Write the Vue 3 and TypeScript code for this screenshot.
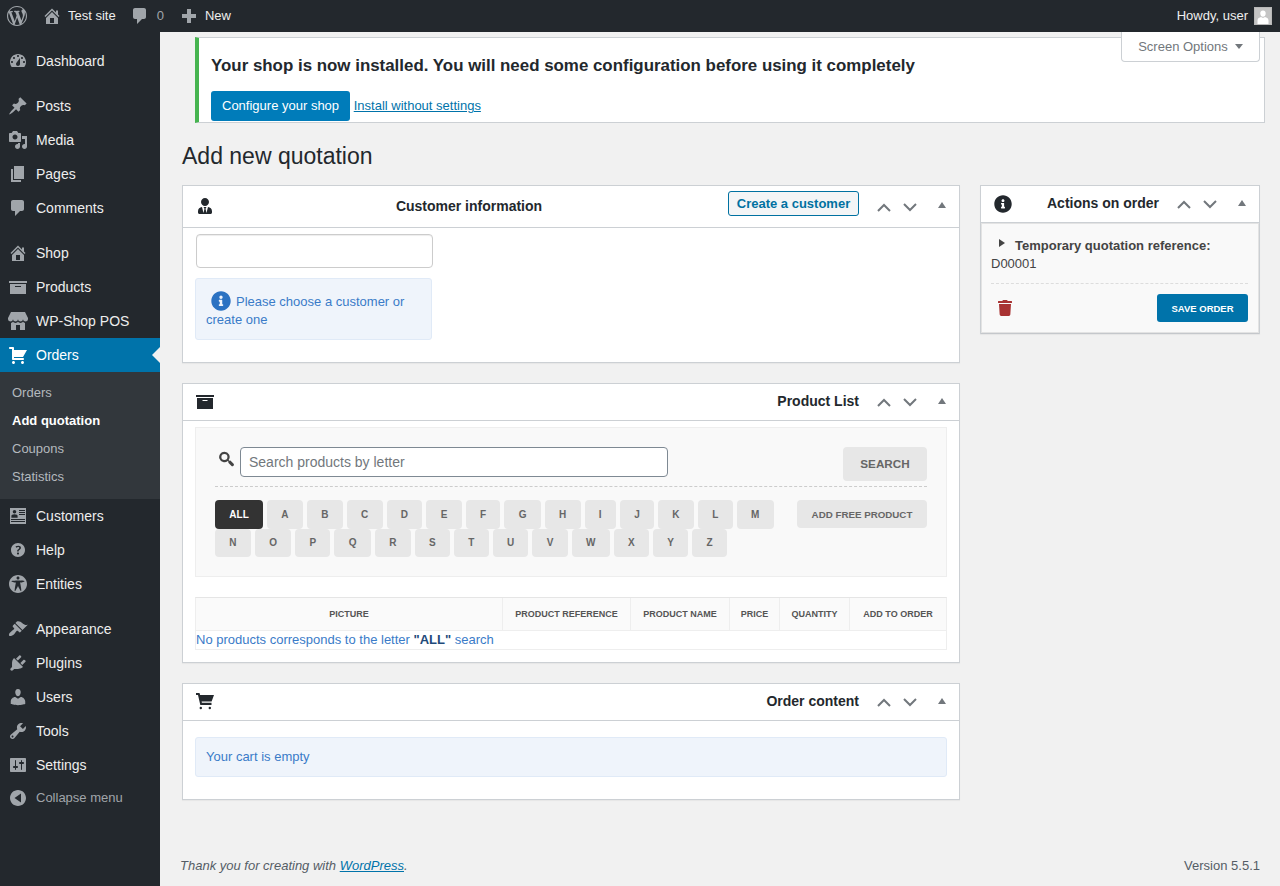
<script setup lang="ts">
const icons: Record<string, string> = {
  wp: "M20 10c0-5.51-4.49-10-10-10C4.48 0 0 4.49 0 10c0 5.52 4.48 10 10 10 5.51 0 10-4.48 10-10zM7.78 15.37L4.37 6.22c.55-.02 1.17-.08 1.17-.08.5-.06.44-1.13-.06-1.11 0 0-1.45.11-2.37.11-.18 0-.37 0-.58-.01C4.12 2.69 6.87 1.11 10 1.11c2.33 0 4.45.87 6.05 2.34-.68-.11-1.65.39-1.65 1.58 0 .74.45 1.36.9 2.1.35.61.55 1.36.55 2.46 0 1.49-1.4 5-1.4 5l-3.03-8.37c.54-.02.82-.17.82-.17.5-.05.44-1.25-.06-1.22 0 0-1.44.12-2.38.12-.87 0-2.33-.12-2.33-.12-.5-.03-.56 1.2-.06 1.22l.92.08 1.26 3.41zM17.41 10c.24-.64.74-1.87.43-4.25.7 1.29 1.05 2.71 1.05 4.25 0 3.29-1.73 6.24-4.4 7.78.97-2.59 1.94-5.2 2.92-7.78zM6.1 18.09C3.12 16.65 1.11 13.53 1.11 10c0-1.3.23-2.48.72-3.59C3.25 10.3 4.67 14.2 6.1 18.09zm4.03-6.63l2.58 6.98c-.86.29-1.76.45-2.71.45-.79 0-1.57-.11-2.29-.33.81-2.38 1.62-4.74 2.42-7.1z",
  dashboard: "M3.76 16h12.48c1.1-1.37 1.76-3.11 1.76-5 0-4.42-3.58-8-8-8s-8 3.58-8 8c0 1.89.66 3.63 1.76 5zM10 4c.55 0 1 .45 1 1s-.45 1-1 1-1-.45-1-1 .45-1 1-1zM6 6c.55 0 1 .45 1 1s-.45 1-1 1-1-.45-1-1 .45-1 1-1zm8 0c.55 0 1 .45 1 1s-.45 1-1 1-1-.45-1-1 .45-1 1-1zm-5.37 5.55L12 7v6c0 1.1-.9 2-2 2s-2-.9-2-2c0-.57.24-1.08.63-1.45zM4 10c.55 0 1 .45 1 1s-.45 1-1 1-1-.45-1-1 .45-1 1-1zm12 0c.55 0 1 .45 1 1s-.45 1-1 1-1-.45-1-1 .45-1 1-1z",
  pin: "M10.44 3.02l1.82-1.82 6.36 6.35-1.83 1.82c-1.05-.68-2.48-.57-3.41.36l-.75.75c-.92.93-1.04 2.35-.35 3.41l-1.83 1.82-2.41-2.41-2.8 2.79c-.42.42-3.38 2.71-3.8 2.29s1.86-3.39 2.28-3.81l2.79-2.79L4.1 9.36l1.83-1.82c1.05.69 2.48.57 3.4-.36l.75-.75c.93-.92 1.05-2.35.36-3.41z",
  media: "M13 11V4c0-.55-.45-1-1-1h-1.67L9 1H5L3.67 3H2c-.55 0-1 .45-1 1v7c0 .55.45 1 1 1h10c.55 0 1-.45 1-1zM7 4.5c1.38 0 2.5 1.12 2.5 2.5S8.38 9.5 7 9.5 4.5 8.38 4.5 7 5.62 4.5 7 4.5zM14 6h5v10.5c0 1.38-1.12 2.5-2.5 2.5S14 17.88 14 16.5s1.12-2.5 2.5-2.5c.17 0 .34.02.5.05V9h-3V6zm-4 8.05V13h2v3.5c0 1.38-1.12 2.5-2.5 2.5S7 17.88 7 16.5 8.12 14 9.5 14c.17 0 .34.02.5.05z",
  page: "M6 15V2h10v13H6zm-1 1h8v2H3V5h2v11z",
  comment: "M5 2h9c1.1 0 2 .9 2 2v7c0 1.1-.9 2-2 2h-2l-5 5v-5H5c-1.1 0-2-.9-2-2V4c0-1.1.9-2 2-2z",
  home: "M16 8.5l1.53 1.53-1.06 1.06L10 4.62l-6.47 6.47-1.06-1.06L10 2.5l4 4v-2h2v4zm-6-2.46l6 5.99V18H4v-5.97zM12 17v-5H8v5h4z",
  archive: "M19 4v2H1V4h18zM2 7h16v10H2V7zm11 3V9H7v1h6z",
  store: "M1 10c.41.29.96.43 1.5.43.55 0 1.09-.14 1.5-.43.62-.46 1-1.17 1-2 0 .83.37 1.54 1 2 .41.29.96.43 1.5.43.55 0 1.09-.14 1.5-.43.62-.46 1-1.17 1-2 0 .83.37 1.54 1 2 .41.29.96.43 1.51.43.54 0 1.08-.14 1.49-.43.62-.46 1-1.17 1-2 0 .83.37 1.54 1 2 .41.29.96.43 1.5.43.55 0 1.09-.14 1.5-.43.63-.46 1-1.17 1-2V7l-3-6H3L0 7v1c0 .83.37 1.54 1 2zm2 8.99h5v-5h4v5h5v-7c-.37-.05-.72-.22-1-.43-.63-.45-1-.73-1-1.56 0 .83-.38 1.11-1 1.56-.41.3-.95.43-1.49.44-.55 0-1.1-.14-1.51-.44-.63-.45-1-.73-1-1.56 0 .83-.38 1.11-1 1.56-.41.3-.95.43-1.5.44-.54 0-1.09-.14-1.5-.44-.63-.45-1-.73-1-1.57 0 .84-.38 1.12-1 1.57-.29.21-.63.38-1 .44v6.99z",
  cart: "M6 13h9c.55 0 1 .45 1 1s-.45 1-1 1H5c-.55 0-1-.45-1-1V4H2c-.55 0-1-.45-1-1s.45-1 1-1h3c.55 0 1 .45 1 1v2h13l-4 7H6v1zm-.5 3c.83 0 1.5.67 1.5 1.5S6.33 19 5.5 19 4 18.33 4 17.5 4.67 16 5.5 16zm9 0c.83 0 1.5.67 1.5 1.5s-.67 1.5-1.5 1.5-1.5-.67-1.5-1.5.67-1.5 1.5-1.5z",
  id: "M2 2h16v16H2zM11 4v1h6V4zm0 2v1h6V6zm0 2v1h6V8zM3 13v1h14v-1zm0 2v1h14v-1zM6.5 4a1.8 1.8 0 1 0 0 3.6 1.8 1.8 0 0 0 0-3.6zM3.4 11.8h6.2V10c0-1-1-1.8-3.1-1.8S3.4 9 3.4 10z",
  help: "M17 10c0-3.87-3.14-7-7-7-3.87 0-7 3.13-7 7s3.13 7 7 7c3.86 0 7-3.13 7-7zm-6.3 1.48H9.14v-.43c0-.38.08-.7.24-.98s.46-.57.88-.89c.41-.29.68-.53.81-.71.14-.18.2-.39.2-.62 0-.25-.09-.44-.28-.58-.19-.13-.45-.19-.79-.19-.58 0-1.25.19-2 .57l-.64-1.28c.87-.49 1.8-.74 2.77-.74.81 0 1.45.2 1.92.58.48.39.71.91.71 1.55 0 .43-.09.8-.29 1.11-.19.32-.57.67-1.11 1.06-.38.28-.61.49-.71.63-.1.15-.15.34-.15.57v.35zm-1.47 2.74c-.18-.17-.27-.42-.27-.73 0-.33.08-.58.26-.75s.43-.25.77-.25c.32 0 .57.09.75.26s.27.42.27.74c0 .3-.09.55-.27.72-.18.18-.43.27-.75.27-.33 0-.58-.09-.76-.26z",
  access: "M19 10c0-4.97-4.03-9-9-9s-9 4.03-9 9 4.03 9 9 9 9-4.03 9-9zm-9-7.4c.83 0 1.5.67 1.5 1.5s-.67 1.51-1.5 1.51c-.82 0-1.5-.68-1.5-1.51s.68-1.5 1.5-1.5zM3.4 7.36c0-.65 6.6-.76 6.6-.76s6.6.11 6.6.76-4.47 1.4-4.47 1.4 1.69 8.14 1.06 8.38c-.62.24-3.19-5.19-3.19-5.19s-2.56 5.43-3.18 5.19c-.63-.24 1.06-8.38 1.06-8.38S3.4 8.01 3.4 7.36z",
  brush: "M14.48 11.06L7.41 3.99l1.5-1.5c.5-.56 2.3-.47 3.51.32 1.21.8 1.43 1.28 2.91 2.1 1.18.64 2.45 1.26 4.45.85zm-.71.71L6.7 4.7 4.93 6.47c-.39.39-.39 1.02 0 1.41l1.06 1.06c.39.39.39 1.03 0 1.42-.6.6-1.43 1.11-2.21 1.69-.35.26-.7.53-1.01.84C1.43 13.23.4 15.98 1.2 16.8c.78.79 3.55-.23 4.88-1.56.3-.3.57-.65.83-1 .58-.78 1.1-1.62 1.69-2.21.39-.39 1.02-.39 1.41 0l1.06 1.06c.39.39 1.02.39 1.41 0z",
  plugin: "M13.11 4.36L9.87 7.6 8 5.73l3.24-3.24c.35-.34 1.05-.2 1.56.32.52.51.66 1.21.31 1.55zm-8 1.77l.91-1.12 9.01 9.01-1.19.84c-.71.71-2.63 1.16-3.82 1.16H6.14L4.9 17.26c-.59.59-1.54.59-2.12 0-.59-.58-.59-1.53 0-2.12l1.24-1.24v-3.88c0-1.13.4-3.19 1.09-3.89zm7.26 3.97l3.24-3.24c.34-.35 1.04-.21 1.55.31.52.51.66 1.21.31 1.55l-3.24 3.25z",
  user: "M10 9.25c-2.27 0-2.73-3.44-2.73-3.44C7 4.02 7.82 2 9.97 2c2.16 0 2.98 2.02 2.71 3.81 0 0-.41 3.44-2.68 3.44zm0 2.57L12.72 10c2.39 0 4.52 2.33 4.52 4.53v2.49s-3.65 1.13-7.24 1.13c-3.65 0-7.24-1.13-7.24-1.13v-2.49c0-2.25 1.94-4.48 4.47-4.48z",
  wrench: "M16.68 9.77c-1.34 1.34-3.3 1.67-4.95.99l-5.41 6.52c-.99.99-2.59.99-3.58 0s-.99-2.59 0-3.57l6.52-5.42c-.68-1.65-.35-3.61.99-4.95 1.28-1.28 3.12-1.62 4.72-1.06l-2.89 2.89 2.82 2.82 2.86-2.87c.53 1.58.18 3.39-1.08 4.65zM3.81 16.21c.4.39 1.04.39 1.43 0 .4-.4.4-1.04 0-1.43-.39-.4-1.03-.4-1.43 0-.39.39-.39 1.03 0 1.43z",
  settings: "M18 16V4c0-.55-.45-1-1-1H3c-.55 0-1 .45-1 1v12c0 .55.45 1 1 1h14c.55 0 1-.45 1-1zM8 11h1c.55 0 1 .45 1 1s-.45 1-1 1H8v1.5c0 .28-.22.5-.5.5s-.5-.22-.5-.5V13H6c-.55 0-1-.45-1-1s.45-1 1-1h1V5.5c0-.28.22-.5.5-.5s.5.22.5.5V11zm5-2h-1c-.55 0-1-.45-1-1s.45-1 1-1h1V5.5c0-.28.22-.5.5-.5s.5.22.5.5V7h1c.55 0 1 .45 1 1s-.45 1-1 1h-1v5.5c0 .28-.22.5-.5.5s-.5-.22-.5-.5V9z",
  collapse: "M18 10c0-4.42-3.58-8-8-8s-8 3.58-8 8 3.58 8 8 8 8-3.58 8-8zm-5-4.5v9L6.5 10z",
  plus: "M17 8v4h-5v5H8v-5H3V8h5V3h4v5z",
}

type MenuItem = { label: string; icon: string; current?: boolean }

const menuGroups: MenuItem[][] = [
  [{ label: "Dashboard", icon: "dashboard" }],
  [
    { label: "Posts", icon: "pin" },
    { label: "Media", icon: "media" },
    { label: "Pages", icon: "page" },
    { label: "Comments", icon: "comment" },
  ],
  [
    { label: "Shop", icon: "home" },
    { label: "Products", icon: "archive" },
    { label: "WP-Shop POS", icon: "store" },
    { label: "Orders", icon: "cart", current: true },
    { label: "Customers", icon: "id" },
    { label: "Help", icon: "help" },
    { label: "Entities", icon: "access" },
  ],
  [
    { label: "Appearance", icon: "brush" },
    { label: "Plugins", icon: "plugin" },
    { label: "Users", icon: "user" },
    { label: "Tools", icon: "wrench" },
    { label: "Settings", icon: "settings" },
  ],
]

const submenu = ["Orders", "Add quotation", "Coupons", "Statistics"]
const lettersRow = "A B C D E F G H I J K L M N O P Q R S T U V W X Y Z".split(" ")
const tableHeads = ["Picture", "Product reference", "Product name", "Price", "Quantity", "Add to order"]
</script>

<template>
  <header class="admin-bar">
    <svg class="bar-logo" viewBox="0 0 20 20"><path :d="icons.wp" fill-rule="evenodd" /></svg>
    <span class="bar-item site">
      <svg viewBox="0 0 20 20"><path :d="icons.home" fill-rule="evenodd" /></svg>Test site
    </span>
    <span class="bar-item comments">
      <svg viewBox="0 0 20 20"><path :d="icons.comment" /></svg><em>0</em>
    </span>
    <span class="bar-item new">
      <svg viewBox="0 0 20 20"><path :d="icons.plus" /></svg>New
    </span>
    <span class="howdy">
      Howdy, user
      <span class="avatar">
        <svg viewBox="0 0 16 16"><path d="M8 2.5c-2 0-2.9 1.6-2.7 3.3.2 1.700 1.100 3 2.700 3s2.500-1.300 2.700-3C10.900 4.100 10 2.500 8 2.500zM8 10l-2-.9c-1.500.4-3.500 1.400-3.500 3.400V16h11v-3.500c0-2-2-3-3.500-3.400z" /></svg>
      </span>
    </span>
  </header>

  <div class="layout">
    <aside class="sidebar">
      <nav v-for="(group, i) in menuGroups" :key="i" class="menu-group">
        <template v-for="item in group" :key="item.label">
          <a class="menu-item" :class="{ current: item.current }">
            <svg viewBox="0 0 20 20"><path :d="icons[item.icon]" fill-rule="evenodd" /></svg>
            <span>{{ item.label }}</span>
          </a>
          <ul v-if="item.current" class="submenu">
            <li v-for="sub in submenu" :key="sub" :class="{ active: sub === 'Add quotation' }">{{ sub }}</li>
          </ul>
        </template>
      </nav>
      <a class="collapse">
        <svg viewBox="0 0 20 20"><path :d="icons.collapse" fill-rule="evenodd" /></svg>
        <span>Collapse menu</span>
      </a>
    </aside>

    <main class="content">
      <button class="screen-options">Screen Options<i class="tri-down" /></button>

      <section class="notice">
        <h2>Your shop is now installed. You will need some configuration before using it completely</h2>
        <p><a class="btn-primary">Configure your shop</a> <a class="plain-link">Install without settings</a></p>
      </section>

      <h1>Add new quotation</h1>

      <div class="columns">
        <div class="col-main">
          <section class="metabox">
            <div class="box-head tall">
              <svg class="head-icon tie" viewBox="0 0 448 512"><path d="M224 256c70.700 0 128-57.300 128-128S294.700 0 224 0 96 57.300 96 128s57.300 128 128 128zm95.800 32.600L272 480l-32-136 32-56h-96l32 56-32 136-47.800-191.400C56.900 292 0 350.300 0 422.400V464c0 26.500 21.500 48 48 48h352c26.500 0 48-21.500 48-48v-41.600c0-72.100-56.900-130.400-128.200-133.800z" /></svg>
              <h3 class="center">Customer information</h3>
              <button class="btn-outline">Create a customer</button>
              <span class="handles">
                <svg viewBox="0 0 26 20"><path d="M7 14l6-6 6 6" /></svg>
                <svg viewBox="0 0 26 20"><path d="M7 7l6 6 6-6" /></svg>
                <i class="tri-up" />
              </span>
            </div>
            <div class="customer-body">
              <input class="customer-input" type="text" />
              <div class="alert customer-alert">
                <svg class="alert-icon" viewBox="0 0 512 512"><path d="M256 8C119 8 8 119.100 8 256c0 137 111 248 248 248s248-111 248-248C504 119.100 393 8 256 8zm0 110c23.200 0 42 18.800 42 42s-18.800 42-42 42-42-18.800-42-42 18.800-42 42-42zm56 254c0 6.600-5.400 12-12 12h-88c-6.600 0-12-5.400-12-12v-24c0-6.600 5.400-12 12-12h12v-64h-12c-6.600 0-12-5.400-12-12v-24c0-6.600 5.400-12 12-12h64c6.600 0 12 5.400 12 12v100h12c6.600 0 12 5.400 12 12v24z" /></svg>Please choose a customer or create one
              </div>
            </div>
          </section>

          <section class="metabox">
            <div class="box-head">
              <svg class="head-icon box" viewBox="0 0 18 14"><path d="M0 0h18v2H0zM1 3h16v11H1zm5.500 2v1h5V5z" fill-rule="evenodd" /></svg>
              <h3>Product List</h3>
              <span class="handles">
                <svg viewBox="0 0 26 20"><path d="M7 14l6-6 6 6" /></svg>
                <svg viewBox="0 0 26 20"><path d="M7 7l6 6 6-6" /></svg>
                <i class="tri-up" />
              </span>
            </div>
            <div class="products-body">
              <div class="search-panel">
                <div class="search-row">
                  <svg class="search-icon" viewBox="0 0 20 20"><path d="M8 1a6.500 6.500 0 0 1 5.300 10.300l.9.900 1.300-.2 4 4c.6.600.6 1.500 0 2.100l-.5.500c-.6.600-1.500.600-2.100 0l-4-4 .2-1.300-.9-.9A6.500 6.500 0 1 1 8 1zm0 2.700a3.800 3.800 0 1 0 0 7.600 3.800 3.800 0 0 0 0-7.600z" fill-rule="evenodd" /></svg>
                  <input class="search-input" type="text" placeholder="Search products by letter" />
                  <button class="btn-search">SEARCH</button>
                </div>
                <div class="letters-row">
                  <div class="letters">
                    <button class="letter selected">ALL</button>
                    <button v-for="l in lettersRow" :key="l" class="letter">{{ l }}</button>
                  </div>
                  <button class="letter add-free">ADD FREE PRODUCT</button>
                </div>
              </div>
              <div class="table">
                <div class="table-head">
                  <div v-for="h in tableHeads" :key="h">{{ h }}</div>
                </div>
                <div class="table-row">No products corresponds to the letter <strong>"ALL"</strong> search</div>
              </div>
            </div>
          </section>

          <section class="metabox">
            <div class="box-head">
              <svg class="head-icon cart" viewBox="0 0 18 18"><path d="M0 0h3.500l.6 2H18l-2.400 6.500H5.600l.3 1.200H15.500V12H4.300L2 2H0zM4.800 13.800a1.200 1.200 0 1 1 0 2.400 1.200 1.200 0 0 1 0-2.400zm9 0a1.200 1.200 0 1 1 0 2.400 1.200 1.200 0 0 1 0-2.400z" /></svg>
              <h3>Order content</h3>
              <span class="handles">
                <svg viewBox="0 0 26 20"><path d="M7 14l6-6 6 6" /></svg>
                <svg viewBox="0 0 26 20"><path d="M7 7l6 6 6-6" /></svg>
                <i class="tri-up" />
              </span>
            </div>
            <div class="order-body">
              <div class="alert">Your cart is empty</div>
            </div>
          </section>
        </div>

        <div class="col-side">
          <section class="metabox side">
            <div class="box-head">
              <svg class="head-icon info" viewBox="0 0 512 512"><path d="M256 8C119 8 8 119.100 8 256c0 137 111 248 248 248s248-111 248-248C504 119.100 393 8 256 8zm0 110c23.200 0 42 18.800 42 42s-18.800 42-42 42-42-18.800-42-42 18.800-42 42-42zm56 254c0 6.600-5.400 12-12 12h-88c-6.600 0-12-5.400-12-12v-24c0-6.600 5.400-12 12-12h12v-64h-12c-6.600 0-12-5.400-12-12v-24c0-6.600 5.400-12 12-12h64c6.600 0 12 5.400 12 12v100h12c6.600 0 12 5.400 12 12v24z" /></svg>
              <h3>Actions on order</h3>
              <span class="handles">
                <svg viewBox="0 0 26 20"><path d="M7 14l6-6 6 6" /></svg>
                <svg viewBox="0 0 26 20"><path d="M7 7l6 6 6-6" /></svg>
                <i class="tri-up" />
              </span>
            </div>
            <div class="side-body">
              <p class="reference"><i class="tri-right" /><strong>Temporary quotation reference:</strong><br />D00001</p>
              <div class="side-actions">
                <svg class="trash" viewBox="0 0 448 512"><path d="M432 32H312l-9.400-18.700A24 24 0 0 0 281.100 0H166.800a23.720 23.720 0 0 0-21.400 13.300L136 32H16A16 16 0 0 0 0 48v32a16 16 0 0 0 16 16h416a16 16 0 0 0 16-16V48a16 16 0 0 0-16-16zM53.200 467a48 48 0 0 0 47.900 45h245.800a48 48 0 0 0 47.900-45L416 128H32z" /></svg>
                <button class="btn-save">SAVE ORDER</button>
              </div>
            </div>
          </section>
        </div>
      </div>

      <footer class="footer">
        <span class="thanks">Thank you for creating with <a>WordPress</a>.</span>
        <span>Version 5.5.1</span>
      </footer>
    </main>
  </div>
</template>

<style>
body {
  background: #f1f1f1;
}
</style>

<style scoped>
* {
  box-sizing: border-box;
}
.admin-bar {
  display: flex;
  align-items: center;
  height: 32px;
  background: #23282d;
  color: #eee;
  font: 13px/32px "Liberation Sans", Arial, sans-serif;
}
.admin-bar svg {
  fill: #a0a5aa;
}
.bar-logo {
  width: 20px;
  height: 20px;
  margin-left: 7px;
}
.bar-item {
  display: flex;
  align-items: center;
}
.bar-item svg {
  width: 20px;
  height: 20px;
}
.site {
  margin-left: 15px;
}
.site svg {
  margin-right: 6px;
}
.comments {
  margin-left: 14px;
}
.comments svg {
  margin-right: 7px;
}
.comments em {
  font-style: normal;
  color: #a0a5aa;
}
.new {
  margin-left: 15px;
}
.new svg {
  margin-right: 6px;
}
.howdy {
  display: flex;
  align-items: center;
  margin-left: auto;
  margin-right: 8px;
}
.avatar {
  display: block;
  width: 18px;
  height: 18px;
  margin-left: 6px;
  background: #c4c4c4;
  border: 1px solid #b8b8b8;
  overflow: hidden;
}
.admin-bar .avatar svg {
  display: block;
  width: 16px;
  height: 16px;
  fill: #fff;
}

.layout {
  display: flex;
  min-height: 854px;
}
.sidebar {
  flex: 0 0 160px;
  padding-top: 12px;
  background: #23282d;
  font: 14px/18px "Liberation Sans", Arial, sans-serif;
}
.menu-group {
  margin-bottom: 11px;
}
.menu-group:last-of-type {
  margin-bottom: 0;
}
.menu-item {
  position: relative;
  display: flex;
  align-items: center;
  height: 34px;
  color: #eee;
}
.menu-item svg {
  flex: none;
  width: 20px;
  height: 20px;
  margin: 0 8px;
  fill: #a0a5aa;
}
.menu-item.current {
  background: #0073aa;
  color: #fff;
}
.menu-item.current svg {
  fill: #fff;
}
.menu-item.current::after {
  content: "";
  position: absolute;
  right: 0;
  top: 9px;
  border: 8px solid transparent;
  border-right-color: #f1f1f1;
  border-left-width: 0;
}
.submenu {
  list-style: none;
  margin: 0;
  padding: 7px 0 8px;
  background: #32373c;
  font-size: 13px;
}
.submenu li {
  height: 28px;
  padding: 5px 12px;
  color: #b4b9be;
}
.submenu li.active {
  color: #fff;
  font-weight: 700;
}
.collapse {
  display: flex;
  align-items: center;
  height: 32px;
  color: #a0a5aa;
  font-size: 13px;
}
.collapse svg {
  flex: none;
  width: 20px;
  height: 20px;
  margin: 0 8px;
  fill: #a0a5aa;
}

.content {
  position: relative;
  display: flex;
  flex-direction: column;
  flex: 1;
  min-width: 0;
  padding: 5px 20px 0 22px;
  color: #23282d;
  font: 13px/18px "Liberation Sans", Arial, sans-serif;
}
.screen-options {
  position: absolute;
  top: 0;
  right: 20px;
  display: flex;
  align-items: center;
  justify-content: center;
  width: 139px;
  height: 30px;
  padding: 0;
  background: #fff;
  border: 1px solid #ccd0d4;
  border-top: 0;
  border-radius: 0 0 4px 4px;
  color: #72777c;
  font: 13px "Liberation Sans", Arial, sans-serif;
}
.tri-down {
  width: 0;
  margin-left: 7px;
  border: 4.500px solid transparent;
  border-top: 5px solid #72777c;
  border-bottom: 0;
}
.notice {
  height: 86px;
  margin: 0 -5px 0 13px;
  padding: 1px 12px;
  background: #fff;
  border: 1px solid #ccd0d4;
  border-left: 4px solid #46b450;
}
.notice h2 {
  margin: 15px 0 0;
  font-size: 16.900px;
  line-height: 24px;
  font-weight: 700;
  color: #23282d;
}
.notice p {
  margin: 13px 0 0;
}
.btn-primary {
  display: inline-block;
  height: 30px;
  padding: 0 11px;
  background: #007cba;
  border-radius: 3px;
  color: #fff;
  line-height: 30px;
}
.plain-link {
  color: #0073aa;
  text-decoration: underline;
}
h1 {
  margin: 19px 0 14px;
  font-size: 23px;
  line-height: 29px;
  font-weight: 400;
  color: #23282d;
}
.columns {
  display: grid;
  grid-template-columns: 778px 280px;
  gap: 20px;
  align-items: start;
}
.metabox {
  margin-bottom: 20px;
  background: #fff;
  border: 1px solid #ccd0d4;
  box-shadow: 0 1px 1px rgba(0, 0, 0, 0.04);
}
.box-head {
  display: flex;
  align-items: center;
  height: 37px;
  border-bottom: 1px solid #ccd0d4;
}
.box-head.tall {
  height: 42px;
}
.box-head h3 {
  flex: 1;
  margin: -2px 12px 0 0;
  font-size: 14px;
  line-height: 20px;
  font-weight: 700;
  text-align: right;
  color: #23282d;
}
.box-head h3.center {
  margin-right: 4px;
  text-align: center;
}
.head-icon {
  flex: none;
  margin-left: 13px;
  fill: #23282d;
}
.head-icon.tie {
  width: 18px;
  height: 16px;
  margin-top: -2px;
}
.head-icon.box {
  width: 18px;
  height: 14px;
}
.head-icon.cart {
  width: 18px;
  height: 18px;
}
.head-icon.info {
  width: 18px;
  height: 18px;
}
.btn-outline {
  flex: none;
  width: 131px;
  height: 25px;
  margin-top: -6px;
  margin-right: 12px;
  padding: 0;
  background: #f3f5f6;
  border: 1px solid #0071a1;
  border-radius: 3px;
  color: #0071a1;
  font: 700 13px "Liberation Sans", Arial, sans-serif;
}
.handles {
  display: flex;
  align-items: center;
  flex: none;
}
.handles svg {
  width: 26px;
  height: 20px;
  fill: none;
  stroke: #72777c;
  stroke-width: 2;
}
.tri-up {
  display: block;
  width: 0;
  margin: -3px 13px 0 15px;
  border: 4px solid transparent;
  border-bottom: 6px solid #72777c;
  border-top: 0;
}
.customer-body {
  height: 134px;
  padding: 6px 12px;
}
.customer-input {
  display: block;
  width: 237px;
  height: 34px;
  margin-left: 1px;
  background: #fff;
  border: 1px solid #ccc;
  border-radius: 4px;
  box-shadow: inset 0 1px 1px rgba(0, 0, 0, 0.075);
}
.alert {
  padding: 10px;
  background: #eff4fb;
  border: 1px solid #e0eaf7;
  border-radius: 3px;
  color: #3a7bc8;
  font-size: 13px;
  line-height: 18px;
}
.customer-alert {
  width: 237px;
  height: 62px;
  margin-top: 10px;
  padding-top: 12px;
}
.alert-icon {
  width: 20px;
  height: 20px;
  margin: 0 5px 0 5px;
  vertical-align: -5px;
  fill: #2b72c2;
}
.products-body {
  padding: 6px 12px 12px;
}
.search-panel {
  height: 150px;
  padding: 19px 19px 0;
  background: #f9f9f9;
  border: 1px solid #eee;
}
.search-row {
  display: flex;
  align-items: flex-start;
  height: 40px;
  border-bottom: 1px dashed #ccc;
}
.search-icon {
  flex: none;
  width: 16px;
  height: 16px;
  margin: 4px 6px 0 3px;
  fill: #444;
}
.search-input {
  width: 428px;
  height: 30px;
  padding: 0 8px;
  background: #fff;
  border: 1px solid #7e8993;
  border-radius: 4px;
  color: #32373c;
  font: 14px "Liberation Sans", Arial, sans-serif;
}
.search-input::placeholder {
  color: #72777c;
  opacity: 1;
}
.btn-search {
  width: 84px;
  height: 34px;
  margin-left: auto;
  padding: 0 0 2px;
  background: #e7e7e7;
  border: 0;
  border-radius: 4px;
  color: #666;
  font: 700 11.700px "Liberation Sans", Arial, sans-serif;
}
.letters-row {
  display: flex;
  justify-content: space-between;
  align-items: flex-start;
  margin-top: 13px;
}
.letters {
  display: flex;
  flex-wrap: wrap;
  width: 570px;
  column-gap: 4px;
}
.letter {
  height: 28.500px;
  padding: 0 14.300px;
  background: #e7e7e7;
  border: 0;
  border-radius: 4px;
  color: #666;
  font: 700 10px "Liberation Sans", Arial, sans-serif;
}
.letter.selected {
  background: #333;
  color: #fff;
}
.letter.add-free {
  width: 130px;
  height: 28px;
  padding: 0;
  font-size: 9.750px;
}
.table {
  margin-top: 20px;
  border: 1px solid #eee;
  border-top-color: #e5e5e5;
}
.table-head {
  display: grid;
  grid-template-columns: 307px 128px 99px 50px 70px 96px;
  height: 33px;
  background: #fafafa;
  border-bottom: 1px solid #eee;
}
.table-head div {
  display: flex;
  align-items: center;
  justify-content: center;
  border-right: 1px solid #eee;
  color: #555;
  font-size: 9px;
  font-weight: 700;
  text-transform: uppercase;
}
.table-head div:last-child {
  border-right: 0;
}
.table-row {
  height: 18px;
  color: #3a7bc8;
  font-size: 13px;
  line-height: 18px;
}
.table-row strong {
  color: #1f4a7a;
}
.order-body {
  padding: 16px 12px 22px;
}
.order-body .alert {
  height: 40px;
}
.side-body {
  height: 110px;
  padding: 13px 10px 0 9px;
  background: #f9f9f9;
  border: 1px solid #e3e3e3;
  box-shadow: 0 1px 1px rgba(0, 0, 0, 0.04);
  color: #444;
}
.reference {
  height: 47px;
  margin: 0;
  border-bottom: 1px dashed #ddd;
  line-height: 18px;
}
.tri-right {
  display: inline-block;
  width: 0;
  margin: 0 10px 0 8px;
  vertical-align: 3px;
  border: 4.500px solid transparent;
  border-left: 6px solid #444;
  border-right: 0;
}
.side-actions {
  display: flex;
  justify-content: space-between;
  align-items: center;
  margin-top: 10px;
  padding-left: 7px;
}
.trash {
  width: 14px;
  height: 16px;
  fill: #a83232;
}
.btn-save {
  width: 91px;
  height: 28px;
  padding: 0;
  background: #0073aa;
  border: 0;
  border-radius: 3px;
  color: #fff;
  font: 700 9.500px "Liberation Sans", Arial, sans-serif;
}
.footer {
  display: flex;
  justify-content: space-between;
  margin: auto 0 11px -2px;
  color: #555d66;
  font-size: 13px;
  line-height: 18px;
}
.thanks {
  font-style: italic;
}
.thanks a {
  color: #0073aa;
  text-decoration: underline;
}
</style>
